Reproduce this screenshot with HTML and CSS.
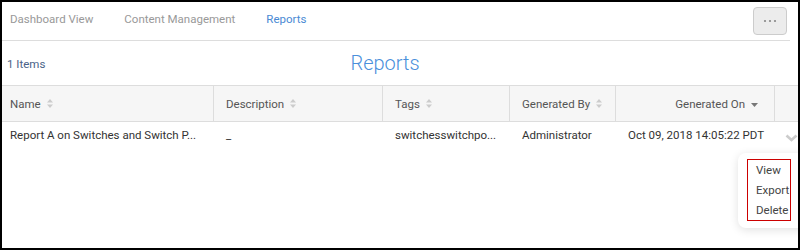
FILE: index.html
```html
<!DOCTYPE html>
<html lang="en">

<head>
    <meta charset="UTF-8">
    <meta name="viewport" content="width=device-width, initial-scale=1.0">
    <title>Reports</title>
    <link rel="stylesheet" href="styles.css">
</head>

<body>
    <div class="frame">
        <nav class="nav">
            <a class="nav__tab">Dashboard View</a>
            <a class="nav__tab">Content Management</a>
            <a class="nav__tab nav__tab--active">Reports</a>
            <button class="nav__more">
                <svg width="14" height="4" viewBox="0 0 14 4"><circle cx="2" cy="2" r="1.1" fill="#888"/><circle cx="7" cy="2" r="1.1" fill="#888"/><circle cx="12" cy="2" r="1.1" fill="#888"/></svg>
            </button>
        </nav>

        <div class="toolbar">
            <span class="toolbar__count">1 Items</span>
            <h1 class="toolbar__title">Reports</h1>
            <span></span>
        </div>

        <div class="grid">
            <div class="grid__head">
                <div class="th">Name <svg class="sort" width="6" height="9" viewBox="0 0 6 9"><path d="M3 0L6 3.6H0z M3 9L6 5.4H0z" fill="#ccc"/></svg></div>
                <div class="th">Description <svg class="sort" width="6" height="9" viewBox="0 0 6 9"><path d="M3 0L6 3.6H0z M3 9L6 5.4H0z" fill="#ccc"/></svg></div>
                <div class="th">Tags <svg class="sort" width="6" height="9" viewBox="0 0 6 9"><path d="M3 0L6 3.6H0z M3 9L6 5.4H0z" fill="#ccc"/></svg></div>
                <div class="th">Generated By <svg class="sort" width="6" height="9" viewBox="0 0 6 9"><path d="M3 0L6 3.6H0z M3 9L6 5.4H0z" fill="#ccc"/></svg></div>
                <div class="th th--right">Generated On <svg class="sort sort--active" width="7" height="4" viewBox="0 0 7 4"><path d="M0 0H7L3.5 4z" fill="#777"/></svg></div>
                <div class="th"></div>
            </div>
            <div class="grid__row">
                <div class="td">Report A on Switches and Switch P...</div>
                <div class="td">_</div>
                <div class="td">switchesswitchpo...</div>
                <div class="td">Administrator</div>
                <div class="td">Oct 09, 2018 14:05:22 PDT</div>
                <div class="td td--icon">
                    <svg width="13" height="8" viewBox="0 0 13 8"><path d="M1.5 1.5L6.5 6L11.5 1.5" fill="none" stroke="#ccc" stroke-width="2.6"/></svg>
                </div>
            </div>
        </div>

        <div class="menu">
            <ul class="menu__list">
                <li>View</li>
                <li>Export</li>
                <li>Delete</li>
            </ul>
        </div>
    </div>
</body>

</html>
```

FILE: styles.css
```css
* {
    padding: 0;
    margin: 0;
    box-sizing: border-box;
}

body {
    font-family: Roboto, 'Liberation Sans', sans-serif;
    font-size: 11.5px;
    color: #333;
}

.frame {
    position: relative;
    width: 800px;
    height: 250px;
    border: 2px solid #000;
    overflow: hidden;
    background: #fff;
}

.nav {
    display: flex;
    align-items: center;
    height: 39px;
    padding: 0 3px 4px 8px;
    margin-right: 8px;
    border-bottom: 1px solid #ddd;
}

.nav__tab {
    color: #999;
    margin-right: 31px;
    line-height: 14px;
}

.nav__tab--active {
    color: #4a8ad4;
}

.nav__more {
    margin-left: auto;
    width: 34px;
    height: 28px;
    margin-top: 3px;
    display: flex;
    align-items: center;
    justify-content: center;
    background: #ececec;
    border: 1px solid #ccc;
    border-radius: 4px;
}

.toolbar {
    display: grid;
    grid-template-columns: 1fr auto 1fr;
    align-items: center;
    height: 44px;
    padding: 0 35px 0 5px;
}

.toolbar__count {
    color: #4a6288;
    padding-top: 1px;
}

.toolbar__title {
    font-size: 20px;
    font-weight: 300;
    color: #4a8fdb;
    line-height: 24px;
}

.grid__head,
.grid__row {
    display: grid;
    grid-template-columns: 211px 169px 127px 106px 159px 1fr;
}

.grid__head {
    background: #f6f6f6;
    border-top: 1px solid #ddd;
    border-bottom: 1px solid #ddd;
    height: 37px;
}

.th {
    display: flex;
    align-items: center;
    gap: 6px;
    padding-left: 12px;
    border-left: 1px solid #ddd;
    color: #555;
}

.th:first-child {
    padding-left: 8px;
    border-left: 0;
}

.th--right {
    justify-content: flex-end;
    padding-right: 16px;
}

.sort--active {
    margin-top: 2px;
}

.td {
    padding: 6px 0 0 13px;
    line-height: 14px;
    white-space: nowrap;
    overflow: hidden;
}

.td:first-child {
    padding-left: 8px;
}

.td--icon {
    padding: 9px 0 0 11px;
}

.menu {
    position: absolute;
    left: 736px;
    top: 151px;
    width: 80px;
    height: 75px;
    background: #fff;
    border-radius: 8px;
    box-shadow: 0 2px 10px rgba(0, 0, 0, 0.12);
    padding: 6px 0 0 9px;
}

.menu__list {
    list-style: none;
    display: inline-block;
    width: 44px;
    border: 1px solid #c00;
    padding-left: 8px;
}

.menu__list li {
    line-height: 20px;
    color: #444;
    white-space: nowrap;
}
```
